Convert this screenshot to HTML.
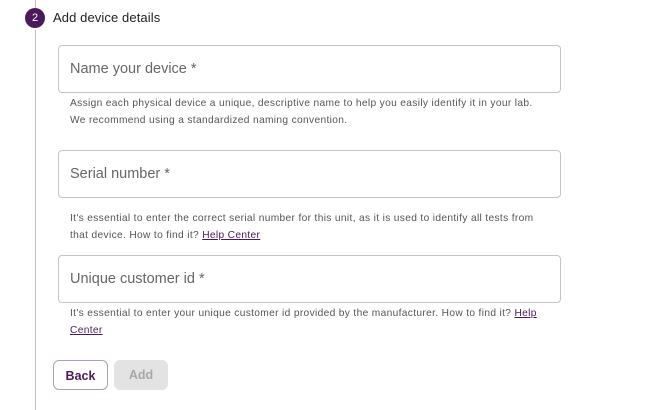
<!DOCTYPE html>
<html><head><style>
body{margin:0;width:670px;height:410px;background:#fff;font-family:"Liberation Sans",sans-serif;position:relative;overflow:hidden}
.vl{position:absolute;left:35px;width:1px;background:#bdbdbd}
.circ{position:absolute;left:25px;top:8px;width:20px;height:20px;border-radius:50%;background:#4a1a5c;color:#fff;font-size:11px;text-align:center;line-height:20px}
.title{position:absolute;left:53px;top:10px;font-size:13px;color:#222;letter-spacing:0.1px}
.inp{position:absolute;left:58px;width:501px;height:46px;border:1px solid #c4c4c4;border-radius:4px;box-sizing:content-box}
.inp span{position:absolute;left:11px;top:15px;font-size:14.5px;color:#666}
.help{position:absolute;left:70px;font-size:10.2px;color:#555;line-height:17px;letter-spacing:0.34px;white-space:nowrap}
.help a{color:#4a1a5c;text-decoration:underline}
.btn{position:absolute;top:360px;height:30px;border-radius:6px;font-size:12.5px;font-weight:bold;text-align:center;line-height:30px;box-sizing:border-box}
</style></head><body>
<div class="vl" style="top:0;height:8px"></div>
<div class="vl" style="top:30px;height:380px"></div>
<div class="circ">2</div>
<div class="title">Add device details</div>
<div class="inp" style="top:45px"><span>Name your device *</span></div>
<div class="help" style="top:95px">Assign each physical device a unique, descriptive name to help you easily identify it in your lab.<br>We recommend using a standardized naming convention.</div>
<div class="inp" style="top:150px"><span>Serial number *</span></div>
<div class="help" style="top:210px">It's essential to enter the correct serial number for this unit, as it is used to identify all tests from<br>that device. How to find it? <a>Help Center</a></div>
<div class="inp" style="top:255px"><span>Unique customer id *</span></div>
<div class="help" style="top:305px">It's essential to enter your unique customer id provided by the manufacturer. How to find it? <a>Help</a><br><a>Center</a></div>
<div class="btn" style="left:53px;width:55px;border:1px solid #b59ac0;color:#4a1a5c;background:#fff">Back</div>
<div class="btn" style="left:114px;width:54px;background:#e3e3e3;color:#a8a8a8">Add</div>
</body></html>
